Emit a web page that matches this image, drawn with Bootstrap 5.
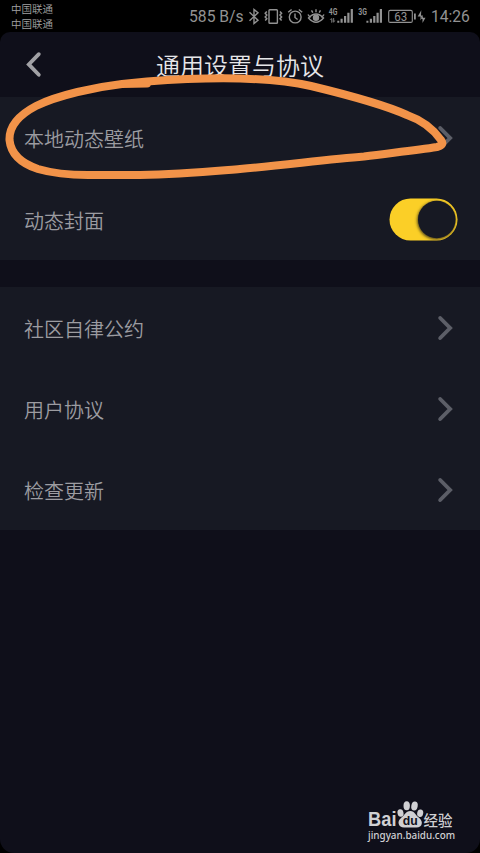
<!DOCTYPE html>
<html lang="zh-CN">
<head>
<meta charset="utf-8">
<meta name="viewport" content="width=device-width, initial-scale=1">
<title>通用设置与协议</title>
<link href="https://cdn.jsdelivr.net/npm/bootstrap@5.3.0/dist/css/bootstrap.min.css" rel="stylesheet">
<style>
html,body{height:100%;background:#000;overflow:hidden}
body{font-family:Roboto,"Noto Sans CJK SC",sans-serif;font-weight:350;color:#9c9ca1}
.statusbar{height:32px;padding:0 10px 0 11px;color:#929292;font-weight:400}
.carrier{font-size:10.5px;line-height:14.5px;padding-top:3px;font-weight:350;color:#a2a2a2}
.speed,.clock{line-height:32px;white-space:nowrap;padding-top:1px}
.speed{font-size:15.7px;width:59px}
.clock{font-size:15.6px;width:39px}
.app{height:821px;background:#0f0f1a;border-radius:10px 10px 14px 14px}
.titlebar{height:65px;padding-top:3px}
.titlebar h1{font-size:24px;font-weight:350;color:#e6e6e9;line-height:30px;padding-top:2px}
.back{left:25px;top:19px}
.panel{background:#171923}
.setting{padding:0 27px 0 24px;font-size:20px;line-height:30px;height:81.3px}
.setting span{padding-top:5px}
.panel-first{height:163px}
.panel-first .setting{height:81.5px}
.panel-second{margin-top:27px;height:243px}
.panel-second .setting{height:81px}
.setting .toggle{width:69px;height:43px;margin-right:-5px;margin-top:1px}
.scribble{left:0;top:0;pointer-events:none}
.watermark{right:24px;bottom:12px;width:88px;color:#d0d0d3;font-weight:400}
.domain{font-family:"Noto Sans",sans-serif;font-size:9.9px;line-height:12px;white-space:nowrap;font-weight:500}
svg{display:block;flex-shrink:0}
</style>
</head>
<body class="position-relative">
<header class="statusbar d-flex align-items-start">
  <div class="carrier me-auto"><div>中国联通</div><div>中国联通</div></div>
  <div class="speed">585 B/s</div>
  <svg width="183" height="32" viewBox="248 0 183 32" fill="none" stroke="#929292" stroke-width="1.4">
    <path d="M249.5 12.2L258 20.3L254 23.5V9.5L258 12.7L249.5 20.8"/>
    <rect x="269" y="9.7" width="8.4" height="13.6" rx=".8"/>
    <path d="M266.8 11.5l-1.6 1.8 1.6 1.8-1.6 1.8 1.6 1.8-1.6 1.8M280 11.5l1.6 1.8-1.6 1.8 1.6 1.8-1.6 1.8 1.6 1.8" stroke-width="1.5"/>
    <circle cx="295.2" cy="17" r="5.9"/><path d="M295 13.5v4l2.6 2M288.2 12.3l3.4-2.8M302.2 12.3l-3.4-2.8"/>
    <path d="M308 14.5q1 2.200 3 2.500M324 14.500q-1 2.200-3 2.500M308.500 18q7.500-8 15 0q-7.500 8.500-15 0z"/><circle cx="316" cy="17.8" r="2.5" fill="#929292"/>
    <path d="M316 9.3v3M311.500 10.300l1.300 2.400M320.500 10.300l-1.300 2.400"/>
    <g fill="#929292" stroke="none">
      <text x="328.8" y="15.3" font-size="9.2" font-weight="700" textLength="8.6" lengthAdjust="spacingAndGlyphs">4G</text>
      <path d="M329.5 20l2-2 .8.8v4h-1.2v-3zM333 18h1.2v2.5h1.3l-1.8 2.2-1-1z" opacity=".7"/>
      <path d="M337.3 20.7h2v2h-2zM340.5 18.7h2.2v4h-2.2zM344 16h2.2v6.7H344zM347.3 12.8h2.2v9.9h-2.2zM350.7 9h2.2v13.7h-2.2z"/>
      <text x="358.3" y="15.3" font-size="9.2" font-weight="700" textLength="8.6" lengthAdjust="spacingAndGlyphs">3G</text>
      <path d="M366.4 20.7h2v2h-2zM369.8 18.7h2.2v4h-2.2zM373.2 16h2.2v6.7h-2.2zM376.5 12.8h2.2v9.9h-2.2zM379.8 9h2.2v13.7h-2.2z"/>
      <text x="394.3" y="21.1" font-size="12.2" textLength="13" lengthAdjust="spacingAndGlyphs">63</text>
      <path d="M414 13.5h1.8v6H414zM421.3 10.3l-3.6 6.2h2.8v4l2.5-5h-2zM423 14.8v3h2.5l-3 5.2v-4h-1.4z"/>
    </g>
    <rect x="388.7" y="10.4" width="23.6" height="12" rx="1.5" stroke-width="1.1"/>
  </svg>
  <div class="clock">14:26</div>
</header>
<main class="app">
  <div class="titlebar position-relative d-flex align-items-center justify-content-center">
    <svg class="back position-absolute" width="18" height="27" viewBox="0 0 18 27" fill="none" stroke="#a1a1a5" stroke-width="3.8" stroke-linecap="round"><path d="M13.8 3.2L3.8 13.4L13.8 23.8"/></svg>
    <h1 class="mb-0">通用设置与协议</h1>
  </div>
  <section class="panel panel-first">
    <div class="setting d-flex align-items-center justify-content-between"><span>本地动态壁纸</span><svg width="16" height="26" viewBox="0 0 16 26" fill="none" stroke="#5c5e67" stroke-width="3.9" stroke-linecap="round"><path d="M3.2 3L13.1 13L3.2 23"/></svg></div>
    <div class="setting d-flex align-items-center justify-content-between"><span>动态封面</span>
      <svg class="toggle" viewBox="0 0 69 43" role="img" aria-label="已开启">
        <defs><filter id="knob-shadow" x="-20%" y="-20%" width="140%" height="140%"><feGaussianBlur stdDeviation="1.4"/></filter><clipPath id="track"><rect x=".5" y=".5" width="68" height="42" rx="21"/></clipPath></defs>
        <rect x=".5" y=".5" width="68" height="42" rx="21" fill="#fbcf27"/>
        <g clip-path="url(#track)"><circle cx="47.2" cy="22.5" r="19" fill="#4b3f17" filter="url(#knob-shadow)"/></g>
        <circle cx="47.8" cy="21.5" r="18.8" fill="#171923"/>
      </svg></div>
  </section>
  <section class="panel panel-second">
    <div class="setting d-flex align-items-center justify-content-between"><span>社区自律公约</span><svg width="16" height="26" viewBox="0 0 16 26" fill="none" stroke="#5c5e67" stroke-width="3.9" stroke-linecap="round"><path d="M3.2 3L13.1 13L3.2 23"/></svg></div>
    <div class="setting d-flex align-items-center justify-content-between"><span>用户协议</span><svg width="16" height="26" viewBox="0 0 16 26" fill="none" stroke="#5c5e67" stroke-width="3.9" stroke-linecap="round"><path d="M3.2 3L13.1 13L3.2 23"/></svg></div>
    <div class="setting d-flex align-items-center justify-content-between"><span>检查更新</span><svg width="16" height="26" viewBox="0 0 16 26" fill="none" stroke="#5c5e67" stroke-width="3.9" stroke-linecap="round"><path d="M3.2 3L13.1 13L3.2 23"/></svg></div>
  </section>
</main>
<svg class="scribble position-absolute" width="480" height="200" viewBox="0 0 480 200" fill="none" stroke="#f29349" stroke-width="8" stroke-linecap="round" stroke-linejoin="round">
  <path d="M147 83.500L122 84C96 87 58 95 36 106C17 116 9 127 9.500 140C11 155 23 164 38 169C55 174 72 175 88 175H140C180 174.500 210 171.500 240 169C285 165 330 159 364 156.500C390 153 415 150.500 437 147Q445 145 441 140C434 130 424 121 407 115C385 105 340 93 311 86C275 78 220 76 147 81.500L122 84"/>
</svg>
<div class="watermark position-absolute">
  <svg width="88" height="30" viewBox="0 0 88 30" fill="#d0d0d3">
    <text x="0" y="27" font-family="Liberation Sans, sans-serif" font-size="19.5" font-weight="700" textLength="28.500" lengthAdjust="spacingAndGlyphs">Bai</text>
    <ellipse cx="32.500" cy="14" rx="3" ry="3.800" transform="rotate(-12 32.5 14)"/><ellipse cx="38.700" cy="6.800" rx="3.200" ry="4.500"/><ellipse cx="46.500" cy="7" rx="3.200" ry="4.500" transform="rotate(10 46.5 7)"/><ellipse cx="52.200" cy="14.200" rx="3" ry="3.800" transform="rotate(12 52.2 14.2)"/>
    <path d="M42.300 12C37.500 12 37 16 33 19C28.500 22.500 30.500 28.500 36 28.500H48.500C54.500 28.500 55.500 22.500 51.300 19C47 16 47 12 42.300 12Z"/>
    <text x="34.800" y="26" fill="#0f0f1a" font-family="Liberation Sans, sans-serif" font-size="13.500" font-weight="700" textLength="15" lengthAdjust="spacingAndGlyphs">du</text>
    <text x="55.500" y="26.500" font-family="Noto Sans CJK SC, sans-serif" font-size="15" font-weight="500" textLength="29" lengthAdjust="spacingAndGlyphs">经验</text>
  </svg>
  <div class="domain">jingyan.baidu.com</div>
</div>
<script src="https://cdn.jsdelivr.net/npm/bootstrap@5.3.0/dist/js/bootstrap.bundle.min.js"></script>
</body>
</html>
